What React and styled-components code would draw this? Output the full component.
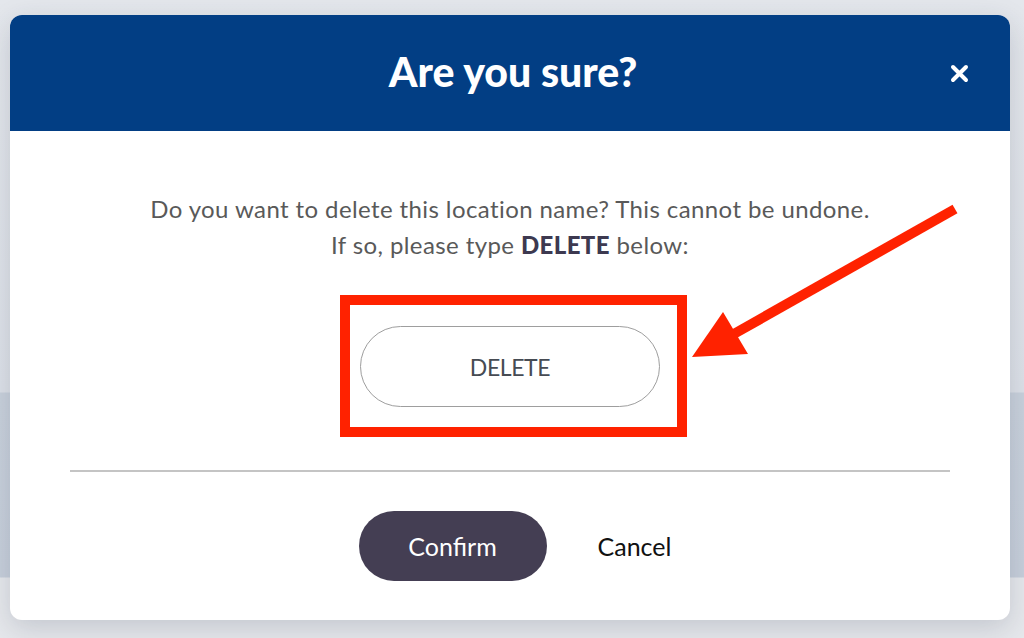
import React from "react";
import styled, { createGlobalStyle } from "styled-components";

const GlobalStyle = createGlobalStyle`
  html, body {
    margin: 0;
    padding: 0;
  }
  body {
    font-family: "Lato", "Open Sans", sans-serif;
  }
`;

const Page = styled.div`
  width: 1024px;
  height: 638px;
  box-sizing: border-box;
  padding: 15px 14px 18px 10px;
  background: linear-gradient(
    to bottom,
    #e4e7ec 0px,
    #dde1e8 392px,
    #c9d1dc 393px,
    #c7cfdb 577px,
    #e6e8ec 578px
  );
  overflow: hidden;
`;

const Modal = styled.div`
  position: relative;
  height: 100%;
  display: flex;
  flex-direction: column;
  background: #ffffff;
  border-radius: 12px;
  overflow: hidden;
  box-shadow: 0 8px 28px rgba(40, 50, 70, 0.18);
`;

const Header = styled.div`
  height: 116px;
  flex: none;
  display: flex;
  align-items: center;
  justify-content: center;
  background: #023e84;
  position: relative;
`;

const Title = styled.h1`
  margin: 0 0 4px 6px;
  color: #ffffff;
  font-size: 41px;
  font-weight: 900;
  letter-spacing: 0;
`;

const CloseButton = styled.button`
  position: absolute;
  right: 40px;
  top: 47px;
  width: 22px;
  height: 22px;
  padding: 0;
  border: none;
  background: transparent;
  display: flex;
  align-items: center;
  justify-content: center;
  cursor: pointer;
`;

const Body = styled.div`
  flex: 1;
  display: flex;
  flex-direction: column;
  align-items: center;
  padding: 60px 60px 0;
`;

const Message = styled.p`
  margin: 0;
  text-align: center;
  color: #595959;
  font-size: 24px;
  letter-spacing: 0.4px;
  line-height: 36px;

  strong {
    color: #3d3950;
    font-weight: 900;
  }
`;

const Highlight = styled.div`
  margin-top: 32px;
  margin-right: -7px;
  padding: 21px 17px 20px 10px;
  border: 10px solid #ff2200;
`;

const ConfirmInput = styled.input`
  box-sizing: border-box;
  width: 300px;
  height: 81px;
  border: 1.5px solid #9e9e9e;
  border-radius: 41px;
  background: #fff;
  text-align: center;
  font-family: "Lato", sans-serif;
  font-size: 23px;
  letter-spacing: -0.4px;
  color: #464b53;
  outline: none;
`;

const Divider = styled.hr`
  align-self: stretch;
  margin: 33px 0 0;
  border: none;
  height: 2px;
  background: #c4c4c4;
`;

const Actions = styled.div`
  display: flex;
  align-items: center;
  gap: 51px;
  margin: 39px 0 0 10px;
`;

const Button = styled.button`
  height: 70px;
  padding: 0 ${(p) => (p.primary ? "49px" : "0")};
  min-width: ${(p) => (p.primary ? "188px" : "0")};
  border: none;
  border-radius: 35px;
  background: ${(p) => (p.primary ? "#443e53" : "transparent")};
  color: ${(p) => (p.primary ? "#ffffff" : "#111111")};
  font-family: "Lato", sans-serif;
  font-size: 25px;
  cursor: pointer;
`;

const Annotation = styled.svg`
  position: absolute;
  left: 0;
  top: 0;
  pointer-events: none;
`;

export default function App() {
  return (
    <>
      <GlobalStyle />
      <Page>
        <Modal>
          <Header>
            <Title>Are you sure?</Title>
            <CloseButton aria-label="Close">
              <svg width="19" height="19" viewBox="0 0 19 19">
                <path
                  d="M3 3 L16 16 M16 3 L3 16"
                  stroke="#fff"
                  strokeWidth="4"
                  strokeLinecap="round"
                />
              </svg>
            </CloseButton>
          </Header>
          <Body>
            <Message>
              Do you want to delete this location name? This cannot be undone.
              <br />
              If so, please type <strong>DELETE</strong> below:
            </Message>
            <Highlight>
              <ConfirmInput defaultValue="DELETE" />
            </Highlight>
            <Divider />
            <Actions>
              <Button primary>Confirm</Button>
              <Button>Cancel</Button>
            </Actions>
          </Body>
          <Annotation width="1000" height="605" viewBox="0 0 1000 605">
            <line x1="945" y1="194" x2="722" y2="320" stroke="#ff2200" strokeWidth="10" />
            <polygon points="682,342 713,297 738,339" fill="#ff2200" />
          </Annotation>
        </Modal>
      </Page>
    </>
  );
}
